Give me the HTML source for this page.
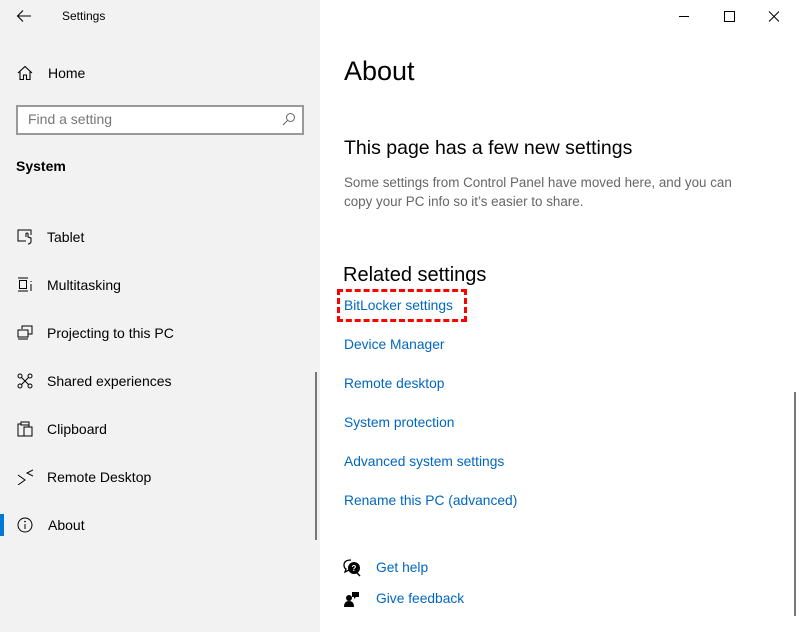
<!DOCTYPE html>
<html><head><meta charset="utf-8"><style>
*{margin:0;padding:0;box-sizing:border-box}
body{width:798px;height:632px;overflow:hidden;font-family:"Liberation Sans",sans-serif;background:#fff;position:relative;color:#000}
.left{position:absolute;left:0;top:0;width:320px;height:632px;background:#f2f2f2}
.a{position:absolute;white-space:nowrap}
.nav{font-size:14px;color:#000}
.link{font-size:13.8px;color:#0067c0}
svg{position:absolute}
</style></head><body>
<div class="left"></div>
<svg style="left:16px;top:9px" width="16" height="14" viewBox="0 0 16 14"><path d="M15 7H2M7 1.5L1.5 7L7 12.5" stroke="#000" stroke-width="1.1" fill="none"/></svg>
<div class="a" style="left:62px;top:9px;font-size:12px">Settings</div>
<svg style="left:17px;top:65px" width="16" height="16" viewBox="0 0 16 16"><path d="M1 8L8 1.5L15 8M3 6.5V14.5H6.5V10H9.5V14.5H13V6.5" stroke="#000" stroke-width="1.1" fill="none"/></svg>
<div class="a nav" style="left:48px;top:65px">Home</div>
<div class="a" style="left:16px;top:105px;width:288px;height:30px;border:2px solid #999;background:#fff"></div>
<div class="a" style="left:28px;top:111px;font-size:14px;color:#777">Find a setting</div>
<svg style="left:282px;top:112px" width="14" height="14" viewBox="0 0 14 14"><circle cx="8.5" cy="5.5" r="4" stroke="#666" fill="none"/><path d="M5.5 8.5L1 13" stroke="#666"/></svg>
<div class="a" style="left:16px;top:158px;font-size:14px;font-weight:bold">System</div>

<svg style="left:17px;top:229px" width="16" height="16" viewBox="0 0 16 16"><path d="M9 12H1V1H14V6M9 8V4.5Q10 3.5 11 4.5V8L14 9V13Q13 15 11 15" stroke="#000" fill="none"/></svg>
<div class="a nav" style="left:47px;top:229px">Tablet</div>
<svg style="left:17px;top:277px" width="16" height="16" viewBox="0 0 16 16"><path d="M1 1H11M1 14H11M2.5 3.5H9.5V11.5H2.5ZM14 4V5M14 7V14" stroke="#000" fill="none"/></svg>
<div class="a nav" style="left:47px;top:277px">Multitasking</div>
<svg style="left:17px;top:325px" width="16" height="16" viewBox="0 0 16 16"><path d="M5 4V1H15V9H11M1 5H11V12H1ZM1 14H11" stroke="#000" fill="none"/></svg>
<div class="a nav" style="left:47px;top:325px">Projecting to this PC</div>
<svg style="left:17px;top:373px" width="16" height="16" viewBox="0 0 16 16"><circle cx="3" cy="3" r="2" stroke="#000" fill="none"/><circle cx="13" cy="3" r="2" stroke="#000" fill="none"/><circle cx="3" cy="13" r="2" stroke="#000" fill="none"/><circle cx="13" cy="13" r="2" stroke="#000" fill="none"/><path d="M4.5 4.5L11.5 11.5M11.5 4.5L4.5 11.5" stroke="#000"/></svg>
<div class="a nav" style="left:47px;top:373px">Shared experiences</div>
<svg style="left:17px;top:421px" width="16" height="16" viewBox="0 0 16 16"><path d="M4 3H1V15H7M12 3V6M4 1H12V4H4ZM7 6H15V15H7Z" stroke="#000" fill="none"/></svg>
<div class="a nav" style="left:47px;top:421px">Clipboard</div>
<svg style="left:17px;top:469px" width="16" height="16" viewBox="0 0 16 16"><path d="M1 6L8 11L1 16M16 1L10 4L16 7" stroke="#000" fill="none"/></svg>
<div class="a nav" style="left:47px;top:469px">Remote Desktop</div>
<div class="a" style="left:0;top:514px;width:4px;height:22px;background:#0078d7"></div>
<svg style="left:17px;top:517px" width="16" height="16" viewBox="0 0 16 16"><circle cx="8" cy="8" r="7" stroke="#000" fill="none"/><path d="M8 7V12" stroke="#000"/><circle cx="8" cy="4.6" r=".8"/></svg>
<div class="a nav" style="left:48px;top:517px">About</div>
<div class="a" style="left:315px;top:372px;width:2px;height:168px;background:#777"></div>

<svg style="left:679px;top:10px" width="100" height="14" viewBox="0 0 100 14"><path d="M0 6.5H10" stroke="#000"/><rect x="45.5" y="1.5" width="10" height="10" stroke="#000" fill="none"/><path d="M90 1.5L100 11.5M100 1.5L90 11.5" stroke="#000"/></svg>

<div class="a" style="left:344px;top:56px;font-size:27px">About</div>
<div class="a" style="left:344px;top:137px;font-size:19.5px">This page has a few new settings</div>
<div class="a" style="left:344px;top:173px;font-size:13.4px;color:#666;line-height:19px">Some settings from Control Panel have moved here, and you can<br>copy your PC info so it’s easier to share.</div>
<div class="a" style="left:343px;top:264px;font-size:20px">Related settings</div>
<div class="a" style="left:337px;top:289px;width:130px;height:33px;border:3px dashed #f00"></div>
<div class="a link" style="left:344px;top:298px">BitLocker settings</div>
<div class="a link" style="left:344px;top:337px">Device Manager</div>
<div class="a link" style="left:344px;top:376px">Remote desktop</div>
<div class="a link" style="left:344px;top:415px">System protection</div>
<div class="a link" style="left:344px;top:454px">Advanced system settings</div>
<div class="a link" style="left:344px;top:493px">Rename this PC (advanced)</div>
<svg style="left:343px;top:559px" width="18" height="18" viewBox="0 0 18 18"><path d="M8 1Q1 1 1 6Q1 9 3 10L2 13L6 11" stroke="#000" stroke-width="1.3" fill="none"/><circle cx="11" cy="9" r="6"/><path d="M14 14L17 17" stroke="#000" stroke-width="1.5"/><text x="11" y="12" font-size="8" fill="#fff" text-anchor="middle" font-weight="bold" font-family="Liberation Sans">?</text></svg>
<div class="a link" style="left:376px;top:560px">Get help</div>
<svg style="left:344px;top:591px" width="16" height="16" viewBox="0 0 16 16"><circle cx="5" cy="7" r="3"/><path d="M0 16Q0 10 5 10Q10 10 10 16Z"/><path d="M8 1H15V6H12L10 8V6H8Z"/></svg>
<div class="a link" style="left:376px;top:591px">Give feedback</div>
<div class="a" style="left:794px;top:392px;width:2px;height:224px;background:#777"></div>
</body></html>
